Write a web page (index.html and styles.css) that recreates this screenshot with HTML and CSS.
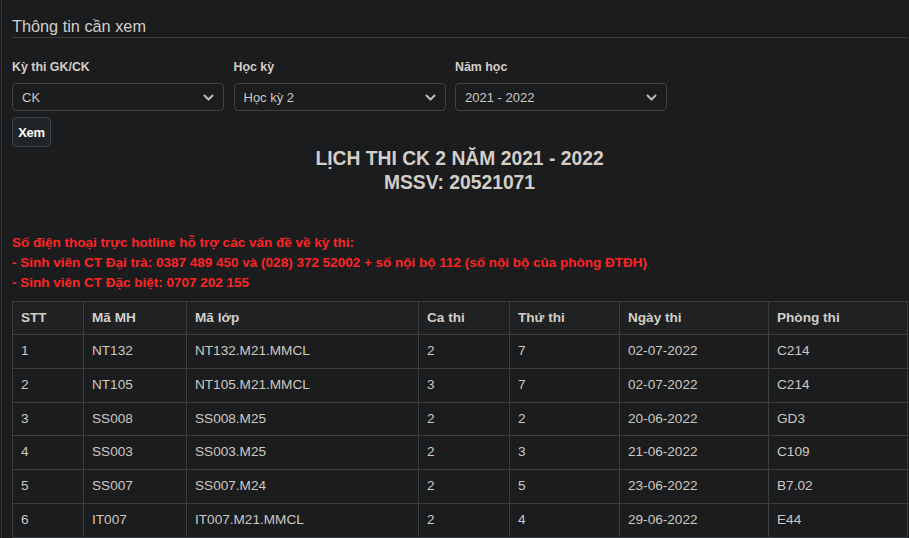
FILE: index.html
```html
<!DOCTYPE html>
<html lang="vi">
<head>
<meta charset="utf-8">
<title>Lịch thi</title>
<link rel="stylesheet" href="styles.css">
</head>
<body>
<div class="page">
  <h4 class="section-title">Thông tin cần xem</h4>
  <div class="filters">
    <div class="field">
      <label class="label">Kỳ thi GK/CK</label>
      <div class="select"><span>CK</span><svg class="chev" width="11" height="7" viewBox="0 0 11 7"><path d="M1.5 1.5 L5.5 5.5 L9.5 1.5" fill="none" stroke="#bfbab3" stroke-width="2" stroke-linecap="round" stroke-linejoin="round"/></svg></div>
    </div>
    <div class="field">
      <label class="label">Học kỳ</label>
      <div class="select"><span>Học kỳ 2</span><svg class="chev" width="11" height="7" viewBox="0 0 11 7"><path d="M1.5 1.5 L5.5 5.5 L9.5 1.5" fill="none" stroke="#bfbab3" stroke-width="2" stroke-linecap="round" stroke-linejoin="round"/></svg></div>
    </div>
    <div class="field">
      <label class="label">Năm học</label>
      <div class="select"><span>2021 - 2022</span><svg class="chev" width="11" height="7" viewBox="0 0 11 7"><path d="M1.5 1.5 L5.5 5.5 L9.5 1.5" fill="none" stroke="#bfbab3" stroke-width="2" stroke-linecap="round" stroke-linejoin="round"/></svg></div>
    </div>
  </div>
  <button class="btn">Xem</button>
  <h3 class="schedule-title">LỊCH THI CK 2 NĂM 2021 - 2022<br>MSSV: 20521071</h3>
  <div class="hotline">
    <div>Số điện thoại trực hotline hỗ trợ các vấn đề về kỳ thi:</div>
    <div>- Sinh viên CT Đại trà: 0387 489 450 và (028) 372 52002 + số nội bộ 112 (số nội bộ của phòng ĐTĐH)</div>
    <div>- Sinh viên CT Đặc biệt: 0707 202 155</div>
  </div>
  <table class="exam-table">
    <colgroup>
      <col class="c1"><col class="c2"><col class="c3"><col class="c4"><col class="c5"><col class="c6"><col class="c7">
    </colgroup>
    <thead>
      <tr><th>STT</th><th>Mã MH</th><th>Mã lớp</th><th>Ca thi</th><th>Thứ thi</th><th>Ngày thi</th><th>Phòng thi</th></tr>
    </thead>
    <tbody>
      <tr><td>1</td><td>NT132</td><td>NT132.M21.MMCL</td><td>2</td><td>7</td><td>02-07-2022</td><td>C214</td></tr>
      <tr><td>2</td><td>NT105</td><td>NT105.M21.MMCL</td><td>3</td><td>7</td><td>02-07-2022</td><td>C214</td></tr>
      <tr><td>3</td><td>SS008</td><td>SS008.M25</td><td>2</td><td>2</td><td>20-06-2022</td><td>GD3</td></tr>
      <tr><td>4</td><td>SS003</td><td>SS003.M25</td><td>2</td><td>3</td><td>21-06-2022</td><td>C109</td></tr>
      <tr><td>5</td><td>SS007</td><td>SS007.M24</td><td>2</td><td>5</td><td>23-06-2022</td><td>B7.02</td></tr>
      <tr><td>6</td><td>IT007</td><td>IT007.M21.MMCL</td><td>2</td><td>4</td><td>29-06-2022</td><td>E44</td></tr>
    </tbody>
  </table>
</div>
</body>
</html>
```
FILE: styles.css
```css
html, body {
  margin: 0;
  padding: 0;
  background: #1b1c1e;
  color: #cfcac3;
  font-family: "Liberation Sans", Arial, sans-serif;
  font-size: 13.5px;
}
.page {
  margin-left: 1px;
  border-left: 1px solid #34373a;
  padding: 15px 2px 0 10px;
  min-height: 538px;
  box-sizing: border-box;
}
.section-title {
  margin: 0;
  font-size: 16.3px;
  font-weight: normal;
  line-height: 22px;
  color: #d3cec8;
  border-bottom: 1px solid #3a3d40;
}
.filters {
  display: flex;
  gap: 9.5px;
  margin-top: 21px;
}
.field {
  width: 212px;
  display: flex;
  flex-direction: column;
}
.label {
  font-weight: bold;
  font-size: 12.4px;
  line-height: 17px;
  color: #d3cec8;
  margin-bottom: 7px;
}
.select {
  height: 28px;
  box-sizing: border-box;
  border: 1px solid #3e4245;
  border-radius: 4px;
  background: #1b1c1e;
  display: flex;
  align-items: center;
  justify-content: space-between;
  padding: 0 9px 0 9px;
  font-size: 13px;
  color: #cdc8c1;
}
.chev { display: block; }
.btn {
  margin-top: 6px;
  height: 30px;
  width: 39px;
  padding: 0;
  border: 1px solid #3f4346;
  border-radius: 4px;
  background: #212426;
  color: #ffffff;
  font-family: "Liberation Sans", Arial, sans-serif;
  font-size: 13px;
  font-weight: bold;
  letter-spacing: -0.3px;
  display: block;
}
.schedule-title {
  margin: 0;
  text-align: center;
  font-size: 19.3px;
  font-weight: bold;
  line-height: 24px;
  color: #d3cec8;
}
.hotline {
  margin-top: 38px;
  color: #ff2424;
  font-weight: bold;
  font-size: 13.5px;
  line-height: 20px;
}
.exam-table {
  margin-top: 8px;
  width: 895px;
  border-collapse: collapse;
  table-layout: fixed;
  border: 1px solid #3b3e41;
}
.c1 { width: 71px; }
.c2 { width: 103px; }
.c3 { width: 232px; }
.c4 { width: 91px; }
.c5 { width: 110px; }
.c6 { width: 149px; }
.c7 { width: 139px; }
.exam-table th,
.exam-table td {
  border: 1px solid #3b3e41;
  padding: 8px 8px;
  line-height: 16.8px;
  text-align: left;
  font-size: 13.6px;
  color: #cdc8c1;
}
.exam-table th {
  font-weight: bold;
  line-height: 16px;
  background: #1f2123;
  color: #d3cec8;
}
.exam-table td {
  background: #1b1c1e;
}
```
